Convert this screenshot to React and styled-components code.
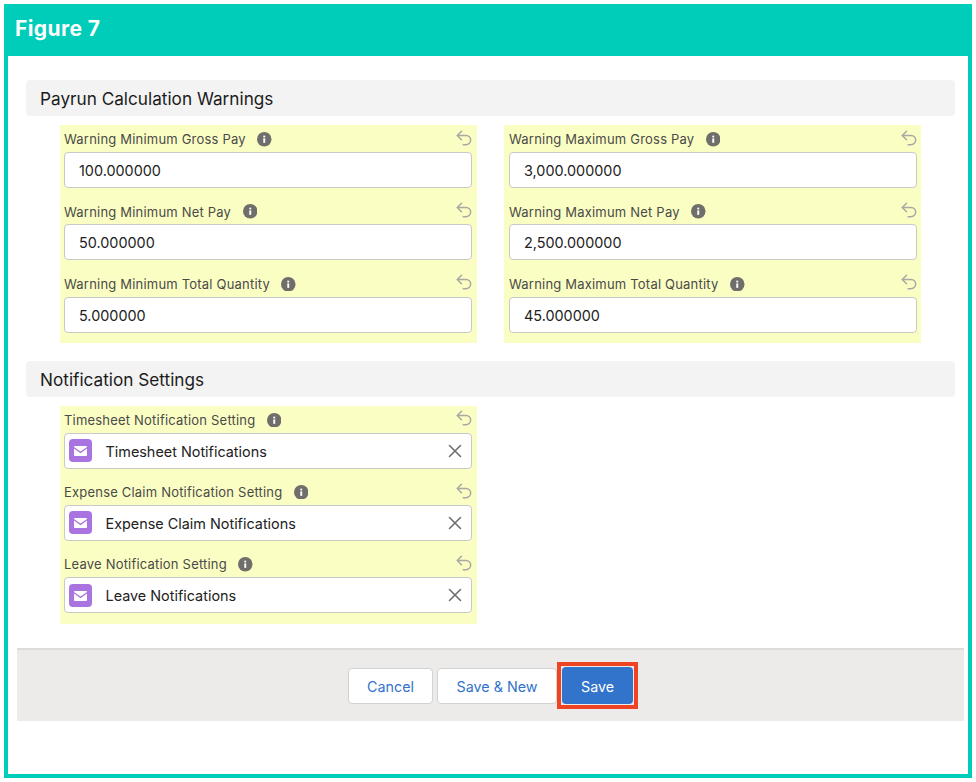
import React from 'react';
import styled, { createGlobalStyle } from 'styled-components';
import { Undo2, X } from 'lucide-react';

const GlobalStyle = createGlobalStyle`
    html, body {
        margin: 0;
        padding: 0;
        background: #fff;
    }
    body {
        font-family: Inter, "Liberation Sans", sans-serif;
        -webkit-font-smoothing: antialiased;
    }
    * {
        box-sizing: border-box;
    }
`;

const warningsLeft = [
    { label: 'Warning Minimum Gross Pay', value: '100.000000' },
    { label: 'Warning Minimum Net Pay', value: '50.000000' },
    { label: 'Warning Minimum Total Quantity', value: '5.000000' },
];

const warningsRight = [
    { label: 'Warning Maximum Gross Pay', value: '3,000.000000' },
    { label: 'Warning Maximum Net Pay', value: '2,500.000000' },
    { label: 'Warning Maximum Total Quantity', value: '45.000000' },
];

const notifications = [
    { label: 'Timesheet Notification Setting', value: 'Timesheet Notifications' },
    { label: 'Expense Claim Notification Setting', value: 'Expense Claim Notifications' },
    { label: 'Leave Notification Setting', value: 'Leave Notifications' },
];

const InfoIcon = () => (
    <InfoWrap viewBox="0 0 15 15">
        <circle cx="7.5" cy="7.5" r="7.5" fill="#706e6b" />
        <rect x="6.5" y="6.6" width="2" height="4.6" fill="#fff" />
        <rect x="6.5" y="3.8" width="2" height="1.8" fill="#fff" />
    </InfoWrap>
);

const MailBadge = () => (
    <BadgeWrap viewBox="0 0 23 23">
        <rect width="23" height="23" rx="4" fill="#a974e0" />
        <path d="M5 8C5 7.4 5.4 7 6 7h11c.6 0 1 .4 1 1l-6.5 4.6L5 8Z" fill="#fff" />
        <path d="M5 9.6l6.5 4.6L18 9.6V16c0 .6-.4 1-1 1H6c-.6 0-1-.4-1-1V9.6Z" fill="#fff" />
    </BadgeWrap>
);

const FieldLabel = ({ label }) => (
    <LabelRow>
        <LabelText>{label}</LabelText>
        <InfoIcon />
        <UndoIcon size={20} strokeWidth={1.8} />
    </LabelRow>
);

const ValueField = ({ label, value }) => (
    <Field>
        <FieldLabel label={label} />
        <InputBox>{value}</InputBox>
    </Field>
);

const LookupField = ({ label, value }) => (
    <Field>
        <FieldLabel label={label} />
        <LookupBox>
            <MailBadge />
            <LookupText>{value}</LookupText>
            <ClearIcon size={22} strokeWidth={1.7} />
        </LookupBox>
    </Field>
);

const App = () => {
    return (
        <>
            <GlobalStyle />
            <Frame>
                <Header>Figure 7</Header>
                <Body>
                    <SectionTitle>Payrun Calculation Warnings</SectionTitle>
                    <Columns>
                        <Panel>
                            {warningsLeft.map((f) => (
                                <ValueField key={f.label} {...f} />
                            ))}
                        </Panel>
                        <Panel $right>
                            {warningsRight.map((f) => (
                                <ValueField key={f.label} {...f} />
                            ))}
                        </Panel>
                    </Columns>
                    <SectionTitle $top={17.5}>Notification Settings</SectionTitle>
                    <Columns>
                        <Panel>
                            {notifications.map((f) => (
                                <LookupField key={f.label} {...f} />
                            ))}
                        </Panel>
                    </Columns>
                </Body>
                <Footer>
                    <OutlineBtn $width={85}>Cancel</OutlineBtn>
                    <OutlineBtn $width={120}>Save &amp; New</OutlineBtn>
                    <Highlight>
                        <SaveBtn>Save</SaveBtn>
                    </Highlight>
                </Footer>
            </Frame>
        </>
    );
};

export default App;

const Frame = styled.div`
    width: 968px;
    height: 774px;
    margin: 4px;
    border: 4px solid #00cdb9;
    border-top: 0;
    background: #fff;
`;

const Header = styled.div`
    height: 52px;
    margin: 0 -4px;
    padding: 11px 0 0 11px;
    background: #00cdb9;
    color: #fff;
    font-size: 21px;
    font-weight: 700;
    letter-spacing: 0.4px;
    line-height: 28px;
`;

const Body = styled.div`
    padding: 24px 13px 0 18px;
`;

const SectionTitle = styled.div`
    height: 36px;
    margin-top: ${(p) => p.$top || 0}px;
    padding-left: 14px;
    background: #f3f3f3;
    border-radius: 4px;
    color: #1c1c1c;
    font-size: 17.2px;
    line-height: 37px;
`;

const Columns = styled.div`
    display: grid;
    grid-template-columns: 417px 417px;
    column-gap: 27px;
    margin: 9px 0 0 34px;
`;

const Panel = styled.div`
    display: flex;
    flex-direction: column;
    gap: 9.3px;
    height: 218px;
    padding: ${(p) => (p.$right ? '0 4px 0 5px' : '0 5px 0 4px')};
    background: #fbfec3;
`;

const Field = styled.div`
    display: flex;
    flex-direction: column;
`;

const LabelRow = styled.div`
    display: flex;
    align-items: center;
    height: 27px;
    padding-top: 1.5px;
`;

const LabelText = styled.span`
    color: #4a4a4a;
    font-size: 13px;
    letter-spacing: 0.2px;
`;

const InfoWrap = styled.svg`
    width: 14.5px;
    height: 14.5px;
    margin-left: 11.5px;
`;

const UndoIcon = styled(Undo2)`
    margin-left: auto;
    margin-top: -3px;
    margin-right: -2px;
    color: #a8a8a5;
`;

const InputBox = styled.div`
    height: 36px;
    padding-left: 14px;
    background: #fff;
    border: 1px solid #c9c9c9;
    border-radius: 4px;
    color: #222;
    font-size: 14.4px;
    line-height: 35px;
`;

const LookupBox = styled.div`
    display: flex;
    align-items: center;
    height: 36px;
    padding: 0 5px 0 4px;
    background: #fff;
    border: 1px solid #c9c9c9;
    border-radius: 4px;
`;

const BadgeWrap = styled.svg`
    width: 23px;
    height: 23px;
`;

const LookupText = styled.span`
    margin-left: 13.5px;
    padding-top: 1px;
    color: #222;
    font-size: 14.4px;
`;

const ClearIcon = styled(X)`
    margin-left: auto;
    color: #706e6b;
`;

const Footer = styled.div`
    display: flex;
    align-items: center;
    justify-content: center;
    gap: 4px;
    width: 947px;
    height: 73.5px;
    margin: 24px 0 0 9px;
    padding: 1px 0 0 5px;
    background: #ecebea;
    border-top: 2px solid #dcdcdc;
`;

const OutlineBtn = styled.button`
    width: ${(p) => p.$width}px;
    height: 36px;
    padding: 1px 0 0;
    background: #fff;
    border: 1px solid #d2d2d2;
    border-radius: 4px;
    color: #3273cc;
    font-family: inherit;
    font-size: 14.3px;
`;

const Highlight = styled.div`
    display: flex;
    margin-left: -4px;
    padding: 1px;
    background: #ecebea;
    border: 4px solid #ee4423;
`;

const SaveBtn = styled.button`
    width: 71px;
    height: 37px;
    padding: 1px 0 0;
    background: #3273cc;
    border: 0;
    border-radius: 4px;
    color: #fff;
    font-family: inherit;
    font-size: 14.3px;
`;
